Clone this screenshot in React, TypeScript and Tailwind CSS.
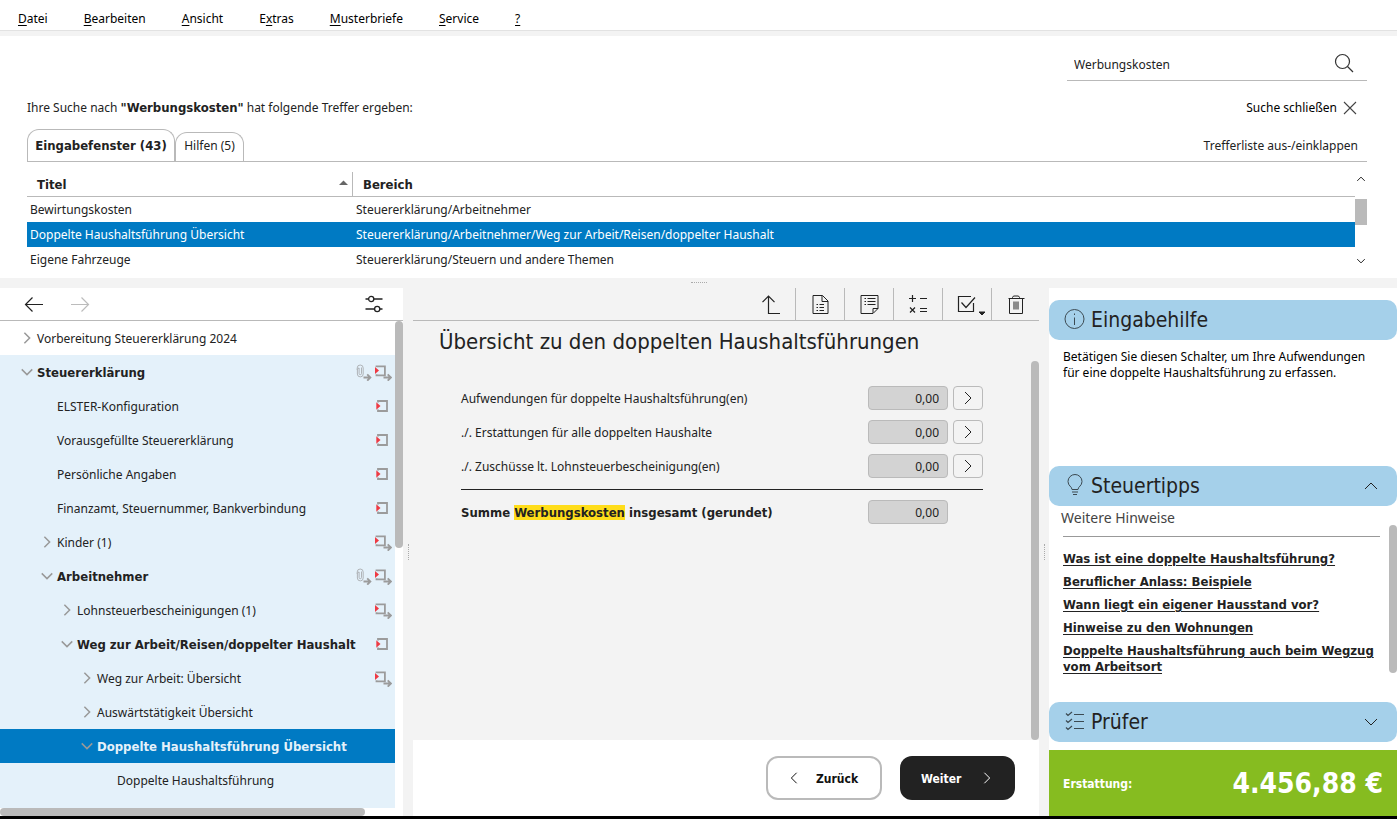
import type { ReactNode } from "react";

type StatusIcon = "pending" | "pendingSub" | "clipSub";

type TreeNode = {
  label: string;
  level: number;
  state?: "open" | "closed";
  bold?: boolean;
  plain?: boolean;
  selected?: boolean;
  icons?: StatusIcon[];
};

const strong = "font-['DejaVu_Sans_Condensed',sans-serif] text-[13px] font-bold";

const menu = [
  ["", "D", "atei"],
  ["", "B", "earbeiten"],
  ["", "A", "nsicht"],
  ["E", "x", "tras"],
  ["", "M", "usterbriefe"],
  ["", "S", "ervice"],
  ["", "?", ""],
];

const hits = [
  { title: "Bewirtungskosten", area: "Steuererklärung/Arbeitnehmer" },
  {
    title: "Doppelte Haushaltsführung Übersicht",
    area: "Steuererklärung/Arbeitnehmer/Weg zur Arbeit/Reisen/doppelter Haushalt",
    selected: true,
  },
  { title: "Eigene Fahrzeuge", area: "Steuererklärung/Steuern und andere Themen" },
];

const tree: TreeNode[] = [
  { label: "Vorbereitung Steuererklärung 2024", level: 0, state: "closed", plain: true },
  { label: "Steuererklärung", level: 0, state: "open", bold: true, icons: ["clipSub", "pendingSub"] },
  { label: "ELSTER-Konfiguration", level: 1, icons: ["pending"] },
  { label: "Vorausgefüllte Steuererklärung", level: 1, icons: ["pending"] },
  { label: "Persönliche Angaben", level: 1, icons: ["pending"] },
  { label: "Finanzamt, Steuernummer, Bankverbindung", level: 1, icons: ["pending"] },
  { label: "Kinder (1)", level: 1, state: "closed", icons: ["pendingSub"] },
  { label: "Arbeitnehmer", level: 1, state: "open", bold: true, icons: ["clipSub", "pendingSub"] },
  { label: "Lohnsteuerbescheinigungen (1)", level: 2, state: "closed", icons: ["pendingSub"] },
  { label: "Weg zur Arbeit/Reisen/doppelter Haushalt", level: 2, state: "open", bold: true, icons: ["pending"] },
  { label: "Weg zur Arbeit: Übersicht", level: 3, state: "closed", icons: ["pendingSub"] },
  { label: "Auswärtstätigkeit Übersicht", level: 3, state: "closed" },
  { label: "Doppelte Haushaltsführung Übersicht", level: 3, state: "open", bold: true, selected: true },
  { label: "Doppelte Haushaltsführung", level: 4 },
];

const indents = ["pl-5", "pl-10", "pl-[60px]", "pl-20", "pl-[100px]"];

const fields = [
  { id: "aufwendungen", label: "Aufwendungen für doppelte Haushaltsführung(en)" },
  { id: "erstattungen", label: "./. Erstattungen für alle doppelten Haushalte" },
  { id: "zuschuesse", label: "./. Zuschüsse lt. Lohnsteuerbescheinigung(en)" },
];

const tips = [
  "Was ist eine doppelte Haushaltsführung?",
  "Beruflicher Anlass: Beispiele",
  "Wann liegt ein eigener Hausstand vor?",
  "Hinweise zu den Wohnungen",
  "Doppelte Haushaltsführung auch beim Wegzug vom Arbeitsort",
];

const chevrons = {
  right: "M5 2l6 6-6 6",
  left: "M11 2L5 8l6 6",
  down: "M2 5l6 6 6-6",
  up: "M2 11l6-6 6 6",
};

function Chevron({ dir, className }: { dir: keyof typeof chevrons; className: string }) {
  return (
    <svg viewBox="0 0 16 16" className={className} fill="none" stroke="currentColor" aria-hidden="true">
      <path d={chevrons[dir]} vectorEffect="non-scaling-stroke" />
    </svg>
  );
}

function Status({ icon }: { icon: StatusIcon }) {
  return (
    <svg viewBox="0 0 18 18" className="size-[18px]" fill="none" stroke="#9b9b9b" aria-hidden="true">
      {icon === "pending" && (
        <>
          <path d="M4 5.500V4h9v10H4v-1.500" strokeWidth="1.8" />
          <path d="M2.300 5.300v7.400l4.200-3.700z" fill="#ee3a43" stroke="none" />
        </>
      )}
      {icon === "pendingSub" && (
        <>
          <path d="M2.500 4V3.300h8.400v9H2.500v-1" strokeWidth="1.800" />
          <path d="M1 4v7l4-3.500z" fill="#ee3a43" stroke="none" />
          <path d="M9.500 14.500h7.200M13.700 11.300l3.200 3.200-3.200 3.200" strokeWidth="1.800" />
        </>
      )}
      {icon === "clipSub" && (
        <>
          <path
            d="M6.500 4.500v6a1.200 1.200 0 0 1-2.400 0V5a1.700 1.700 0 0 0-1.700 1.500v4.500a2.900 2.900 0 0 0 5.800 0V5a3 3 0 0 0-6 0v2"
            stroke="#a9adb0"
            strokeWidth="0.900"
          />
          <path d="M8.500 14.500h6.700M12.200 11.300l3.200 3.200-3.200 3.200" strokeWidth="1.800" />
        </>
      )}
    </svg>
  );
}

function ToolButton({ label, children }: { label: string; children: ReactNode }) {
  return (
    <button
      aria-label={label}
      className="flex h-8 w-[49px] items-center justify-center border-l border-[#b9b9b9] first:border-l-0 last:w-12"
    >
      <svg viewBox="0 0 32 24" className="h-6 w-8 overflow-visible" fill="none" stroke="#222" aria-hidden="true">
        {children}
      </svg>
    </button>
  );
}

function PanelHeader({ title, icon, dir }: { title: string; icon: ReactNode; dir?: "up" | "down" }) {
  return (
    <button className="flex h-10 w-full shrink-0 items-center rounded-[10px] bg-[#a5d0ea] pl-[14px] pr-[18px] text-left">
      <svg viewBox="0 0 24 24" className="size-6 text-[#3c4a52]" fill="none" stroke="currentColor" aria-hidden="true">
        {icon}
      </svg>
      <span className="ml-1 flex-1 font-['DejaVu_Sans_Condensed',sans-serif] text-[21px] leading-7 text-[#222]">
        {title}
      </span>
      {dir && <Chevron dir={dir} className="size-4" />}
    </button>
  );
}

function MenuBar() {
  return (
    <nav className="flex h-[31px] items-center gap-9 border-b border-[#e2e2e2] bg-white px-[18px] pt-2 text-black">
      {menu.map(([before, key, after]) => (
        <button key={key} className="leading-4">
          {before}
          <span className="underline underline-offset-2">{key}</span>
          {after}
        </button>
      ))}
    </nav>
  );
}

function SearchPanel() {
  return (
    <section className="bg-white pl-[27px] pr-[30px]">
      <div className="flex justify-end pt-3">
        <label className="flex h-[33px] w-[300px] items-center border-b border-[#b9b9b9] pl-[7px] pr-[13px]">
          <input
            aria-label="Suche"
            defaultValue="Werbungskosten"
            className="min-w-0 flex-1 bg-transparent pt-0.5 leading-4 outline-none"
          />
          <svg viewBox="0 0 20 20" className="mb-0.5 size-5" fill="none" stroke="#333" strokeWidth="1.2" aria-hidden="true">
            <circle cx="8.500" cy="8.500" r="7" />
            <path d="M13.500 13.500l5.500 5.500" />
          </svg>
        </label>
      </div>

      <div className="flex items-center justify-between pr-[10px] pt-[19px] leading-4">
        <p>
          Ihre Suche nach <b className={strong}>"Werbungskosten"</b> hat folgende Treffer ergeben:
        </p>
        <button className="flex items-center gap-1.5 text-black">
          Suche schließen
          <svg viewBox="0 0 14 14" className="size-[14px]" stroke="#444" strokeWidth="1.1" aria-hidden="true">
            <path d="M1 1l12 12M13 1L1 13" />
          </svg>
        </button>
      </div>

      {/* Result tabs */}
      <div className="mt-[13px] flex items-end justify-between border-b border-[#b9b9b9]">
        <div className="flex items-end" role="tablist">
          <button
            role="tab"
            aria-selected="true"
            className={`h-8 w-[148px] rounded-t-xl border border-b-0 border-[#b9b9b9] ${strong}`}
          >
            Eingabefenster (43)
          </button>
          <button
            role="tab"
            aria-selected="false"
            className="h-[29px] w-[69px] rounded-t-xl border border-b-0 border-[#b9b9b9] pb-0.5"
          >
            Hilfen (5)
          </button>
        </div>
        <button className="mb-[7px] mr-[9px] leading-4">Trefferliste aus-/einklappen</button>
      </div>

      <div className="flex pb-1.5 pt-[10px]">
        <table className="flex-1 table-fixed border-separate border-spacing-0 text-left">
          <thead>
            <tr className="h-[25px]">
              <th className={`w-[326px] border-b border-r border-[#b9b9b9] pl-[10px] pr-1 pt-0.5 ${strong}`}>
                <span className="flex items-center justify-between">
                  Titel
                  <svg viewBox="0 0 9 5" className="mb-1 h-[5px] w-[9px]" fill="#666" aria-hidden="true">
                    <path d="M0 5l4.500-4.500L9 5z" />
                  </svg>
                </span>
              </th>
              <th className={`border-b border-[#b9b9b9] pl-[10px] pt-0.5 ${strong}`}>Bereich</th>
            </tr>
          </thead>
          <tbody>
            {hits.map((hit) => (
              <tr key={hit.title} className={hit.selected ? "h-[25px] bg-[#007ac3] text-white" : "h-[25px]"}>
                <td className="pl-[3px]">{hit.title}</td>
                <td className="pl-[3px]">{hit.area}</td>
              </tr>
            ))}
          </tbody>
        </table>
        <div className="flex w-3 flex-col items-center pb-1.5 pt-0.5">
          <Chevron dir="up" className="size-[10px]" />
          <div className="mt-[15px] h-[26px] w-3 bg-[#bababa]" />
          <Chevron dir="down" className="mt-auto size-[10px]" />
        </div>
      </div>
    </section>
  );
}

function NavTree() {
  return (
    <aside className="flex w-[403px] shrink-0 flex-col bg-white">
      <div className="flex h-[33px] items-center border-b border-[#b9b9b9] pl-6 pr-5">
        <button aria-label="Zurück blättern">
          <svg viewBox="0 0 20 16" className="h-4 w-5" fill="none" stroke="#222" strokeWidth="1.200" aria-hidden="true">
            <path d="M19 8.500H1.500M8.500 1.500l-7 7 7 7" />
          </svg>
        </button>
        <button aria-label="Vor blättern" className="ml-[26px]">
          <svg viewBox="0 0 20 16" className="h-4 w-5" fill="none" stroke="#bcbcbc" strokeWidth="1.200" aria-hidden="true">
            <path d="M1 8.500h17.500M11.500 1.500l7 7-7 7" />
          </svg>
        </button>
        <button aria-label="Ansicht anpassen" className="ml-auto">
          <svg viewBox="0 0 18 18" className="size-[18px]" fill="none" stroke="#222" strokeWidth="1.300" aria-hidden="true">
            <path d="M.500 4h3M9 4h8.500M.500 14h9M15 14h2.500" />
            <circle cx="6.200" cy="4" r="2.600" />
            <circle cx="12.200" cy="14" r="2.600" />
          </svg>
        </button>
      </div>

      <div className="flex flex-1">
        <ul className="flex-1 bg-[#e4f1fa]">
          {tree.map((node) => (
            <li key={node.label + node.level}>
              <button
                className={[
                  "flex h-[34px] w-full items-center pr-[3px] text-left",
                  indents[node.level],
                  node.bold ? strong : "",
                  node.plain ? "bg-white" : "",
                  node.selected ? "bg-[#007ac3] text-[#e4f1fa]" : "",
                ].join(" ")}
              >
                <span className="w-[17px] text-[#999]">
                  {node.state === "closed" && <Chevron dir="right" className="size-[14px] stroke-[1.500]" />}
                  {node.state === "open" && <Chevron dir="down" className="size-[14px] stroke-[1.500]" />}
                </span>
                <span className="flex-1 whitespace-nowrap pt-0.5">{node.label}</span>
                {node.icons?.map((icon) => (
                  <span key={icon} className="ml-px">
                    <Status icon={icon} />
                  </span>
                ))}
              </button>
            </li>
          ))}
        </ul>
        <div className="w-2">
          <div className="h-[227px] rounded-full bg-[#bababa]" />
        </div>
      </div>
      <div className="h-2 w-[365px] rounded-full bg-[#bababa]" />
    </aside>
  );
}

function Toolbar() {
  return (
    <div className="flex h-[33px] justify-end border-b border-[#b9b9b9]">
      <ToolButton label="Ebene nach oben">
        <path d="M13.500 4v17.500H25M7.500 10.200l6-6.200 6 6.200" strokeWidth="1.200" />
      </ToolButton>
      <ToolButton label="Formular">
        <path d="M9 3.500h9.500l5.500 5.500v12.500h-15zM18 3.500v6h6" />
        <path d="M12.500 12.500H14M15.500 12.500H20M12.500 15.500H14M15.500 15.500H20M12.500 18.500H14M15.500 18.500H20" />
      </ToolButton>
      <ToolButton label="Notiz">
        <path d="M8 3.500h17v13l-5 5H8zM20 21v-4.500h5" />
        <path d="M11.500 6.500H13M14.500 6.500h8M11.500 9.500H13M14.500 9.500h8M11.500 12.500H13M14.500 12.500h8" />
      </ToolButton>
      <ToolButton label="Rechner">
        <path d="M7 6.500h7M10.500 3v7M18 6.500h7M18 16.500h7M18 19.500h7M8 15.500l5 5M13 15.500l-5 5" strokeWidth="1.200" />
      </ToolButton>
      <ToolButton label="Prüfen">
        <path d="M20 4.500H7.500v15h15V11M10.500 10.500l4.500 5 9-10" strokeWidth="1.200" />
        <path d="M28 20h6l-3 3z" fill="#222" stroke="#222" strokeLinejoin="round" />
      </ToolButton>
      <ToolButton label="Löschen">
        <path d="M8.500 6.500h16M9.500 6.500v15h13v-15M12.500 6.500v-1l1-1.500h5l1 1.500v1M14 9.500v8M16 9.500v8M18 9.500v8" />
      </ToolButton>
    </div>
  );
}

function AmountInput({ id }: { id: string }) {
  return (
    <input
      id={id}
      readOnly
      defaultValue="0,00"
      className="h-6 w-20 rounded border border-[#bababa] bg-[#d3d3d3] pr-2 text-right outline-none"
    />
  );
}

function FormArea() {
  return (
    <main className="flex min-w-0 flex-1 flex-col">
      <Toolbar />
      <div className="flex flex-1 justify-between">
        <div className="w-[570px] pl-[26px]">
          <h1 className="pt-[7px] font-['DejaVu_Sans_Condensed',sans-serif] text-[22px] leading-7 whitespace-nowrap">
            Übersicht zu den doppelten Haushaltsführungen
          </h1>
          <form className="ml-[22px] mt-[30px]">
            <div className="space-y-[10px] border-b border-[#222] pb-[11px]">
              {fields.map((field) => (
                <div key={field.id} className="flex items-center">
                  <label htmlFor={field.id} className="flex-1 pt-0.5">
                    {field.label}
                  </label>
                  <AmountInput id={field.id} />
                  <button
                    type="button"
                    aria-label={field.label}
                    className="ml-[5px] flex h-6 w-[30px] items-center justify-center rounded border border-[#bababa]"
                  >
                    <Chevron dir="right" className="size-4" />
                  </button>
                </div>
              ))}
            </div>
            <div className="flex items-center pr-[35px] pt-[10px]">
              <label htmlFor="summe" className={`flex-1 pt-0.5 ${strong}`}>
                Summe <mark className="bg-[#ffdd1a] text-[#222]">Werbungskosten</mark> insgesamt (gerundet)
              </label>
              <AmountInput id="summe" />
            </div>
          </form>
        </div>
        <div className="mt-10 w-2 rounded-full bg-[#bababa]" />
      </div>
      <div className="flex h-[76px] items-center justify-end gap-[18px] bg-white pr-6 font-['DejaVu_Sans_Condensed',sans-serif] font-bold">
        <button className="flex h-11 w-[116px] items-center gap-[15px] rounded-xl border-2 border-[#bababa] pl-[19px] text-[#111]">
          <Chevron dir="left" className="size-[14px]" />
          <span className="pt-0.5">Zurück</span>
        </button>
        <button className="flex h-11 w-[115px] items-center justify-between rounded-xl bg-[#222] px-[21px] text-white">
          <span className="pt-0.5">Weiter</span>
          <Chevron dir="right" className="size-[14px]" />
        </button>
      </div>
    </main>
  );
}

function HelpPanel() {
  return (
    <aside className="flex w-[348px] shrink-0 flex-col bg-white pt-3">
      <PanelHeader
        title="Eingabehilfe"
        icon={
          <>
            <circle cx="11.500" cy="11" r="9.500" />
            <path d="M11.500 9.500V17M11.500 5.500V7" />
          </>
        }
      />
      <p className="min-h-[126px] px-[14px] pt-[9px] leading-4 text-black">
        Betätigen Sie diesen Schalter, um Ihre Aufwendungen für eine doppelte Haushaltsführung zu erfassen.
      </p>

      <PanelHeader
        title="Steuertipps"
        dir="up"
        icon={
          <>
            <path d="M9 15.500c0-3-4-3.500-4-8a7 7 0 0 1 14 0c0 4.500-4 5-4 8z" />
            <path d="M9 18h6M10 20.500h4" />
          </>
        }
      />
      <div className="flex flex-1 justify-between pl-3">
        <div className="w-[319px]">
          <h3 className="pt-[3px] text-sm leading-[18px] text-[#444]">Weitere Hinweise</h3>
          <ul className={`ml-0.5 mt-[9px] space-y-[7px] border-t border-[#999] pt-[14px] leading-4 ${strong}`}>
            {tips.map((tip) => (
              <li key={tip}>
                <a href="#" className="underline underline-offset-2">
                  {tip}
                </a>
              </li>
            ))}
          </ul>
        </div>
        <div className="mt-[19px] h-[148px] w-2 rounded-full bg-[#bababa]" />
      </div>

      <PanelHeader
        title="Prüfer"
        dir="down"
        icon={
          <path d="M3 3.500l2 2 4-3.500M3 10.500l2 2 4-3.500M3 17.500l2 2 4-3.500M11 4.500h10M11 11.500h10M11 18.500h10" strokeWidth="1.200" />
        }
      />
      <div className="mt-2 flex h-[66px] shrink-0 items-center justify-between bg-[#86bc20] px-[14px] pt-0.5 font-['DejaVu_Sans_Condensed',sans-serif] font-bold text-white">
        <span>Erstattung:</span>
        <span className="text-[28px]">4.456,88 €</span>
      </div>
    </aside>
  );
}

function VerticalGrip() {
  return (
    <div className="flex w-[10px] shrink-0 items-center justify-center">
      <div className="h-4 border-l border-dotted border-[#aaa]" />
    </div>
  );
}

export default function App() {
  return (
    <div className="flex min-h-screen flex-col border-b-[3px] border-black bg-[#f3f3f3] font-['Noto_Sans',sans-serif] text-xs text-[#222]">
      <MenuBar />
      <div className="pt-[5px]">
        <SearchPanel />
      </div>
      <div className="flex h-[10px] justify-center pt-1">
        <div className="h-px w-4 border-t border-dotted border-[#aaa]" />
      </div>
      <div className="flex flex-1">
        <NavTree />
        <VerticalGrip />
        <FormArea />
        <VerticalGrip />
        <HelpPanel />
      </div>
    </div>
  );
}
